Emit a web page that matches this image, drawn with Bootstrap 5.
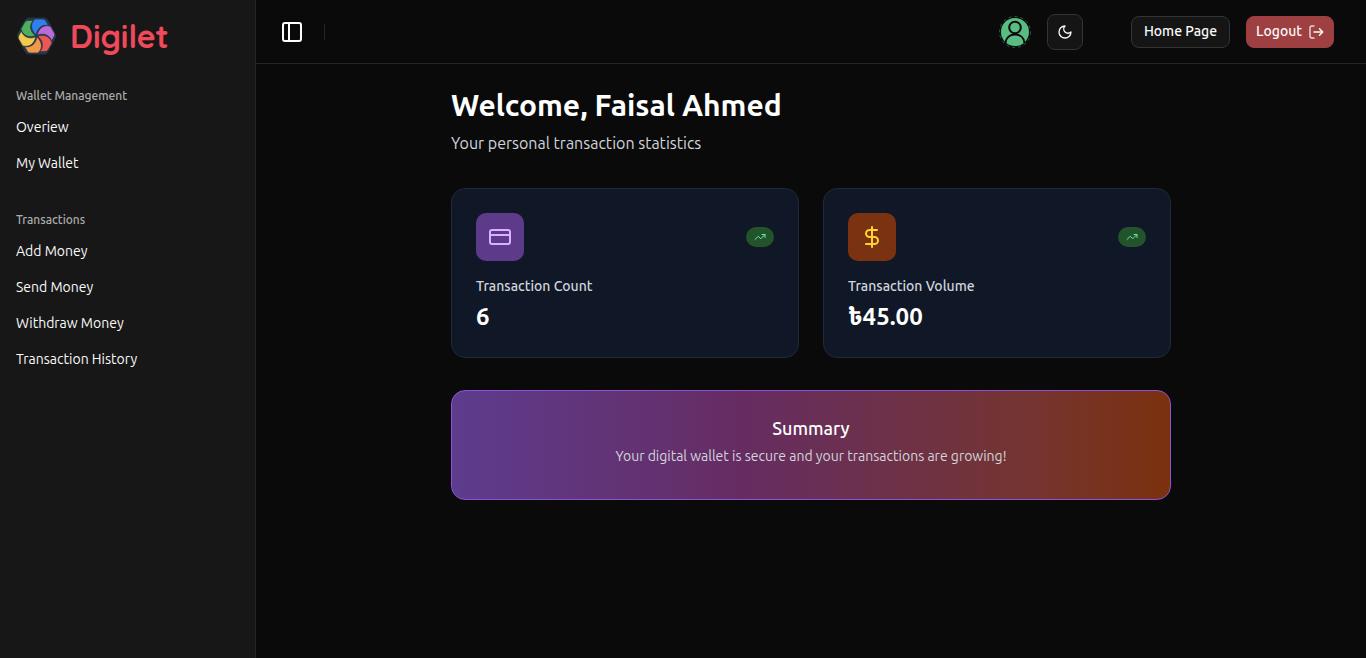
<!DOCTYPE html>
<html lang="en" data-bs-theme="dark">
<head>
<meta charset="utf-8">
<meta name="viewport" content="width=device-width, initial-scale=1">
<title>Digilet – Overview</title>
<link rel="stylesheet" href="https://cdn.jsdelivr.net/npm/bootstrap@5.3.0/dist/css/bootstrap.min.css">
<style>
  body { background: #0a0a0a; color: #fafafa; font-family: Ubuntu, "Noto Sans Bengali", "Noto Sans", sans-serif; font-size: 14px; line-height: 20px; }
  .side { width: 256px; flex: none; background: #171717; border-right: 1px solid #262626; }
  .brand { height: 72px; gap: 12px; color: #f04a5a; font: 700 32px/40px Quicksand, Lato, sans-serif; }
  .brand:hover { color: #f04a5a; }
  .side-label { font-size: 12px; line-height: 32px; font-weight: 500; color: #acacac; }
  .side .nav-link { padding: 5px 0 7px; margin-bottom: 4px; line-height: 20px; color: #fafafa; }
  .topbar { height: 64px; padding: 0 32px 0 24px; border-bottom: 1px solid #262626; }
  .rule { width: 1px; height: 16px; background: #262626; margin-left: 20px; }
  svg.ln { fill: none; stroke: currentColor; stroke-width: 2; stroke-linecap: round; stroke-linejoin: round; display: block; flex: none; }
  .top-btn { --bs-btn-font-size: 14px; --bs-btn-font-weight: 500; --bs-btn-line-height: 20px; --bs-btn-color: #fafafa; --bs-btn-border-radius: 8px; --bs-btn-bg: #151515; --bs-btn-border-color: #343434; --bs-btn-padding-y: 4px; --bs-btn-padding-x: 12px; --bs-btn-hover-color: #fff; --bs-btn-hover-bg: #262626; height: 32px; white-space: nowrap; }
  .square-btn { width: 36px; height: 36px; --bs-btn-padding-x: 0; }
  .logout-btn { --bs-btn-bg: #9e4042; --bs-btn-border-color: #9e4042; --bs-btn-hover-bg: #b04a4c; --bs-btn-padding-x: 9px; gap: 6px; }
  .home-btn { margin-left: 32px; }
  .content { max-width: 768px; padding: 23px 24px 24px; }
  h1 { font-size: 30px; line-height: 36px; font-weight: 700; color: #fff; }
  .sub { font-size: 16px; line-height: 24px; color: #d1d5dc; margin-bottom: 33px; }
  .stat { background: #101828; border: 1px solid #1e2939; border-radius: 14px; }
  .stat-head { margin-bottom: 15px; }
  .tile { width: 48px; height: 48px; border-radius: 10px; }
  .tile-count { background: #5d3a8a; color: #dab2ff; }
  .tile-volume { background: #7b3210; color: #ffd230; }
  .trend { width: 28px; height: 20px; background: #23532b; color: #6ee7a0; }
  .stat-name { font-weight: 500; color: #d1d5dc; margin-bottom: 5px; }
  .stat-value { font-size: 24px; line-height: 32px; font-weight: 700; color: #fff; }
  .summary { margin-top: 32px; padding: 23px 24px 33px; border: 1px solid #8b52d6; border-radius: 14px; background: linear-gradient(90deg, #5d3c8e, #662c62 40%, #6b3050 55%, #743431 80%, #7b310e); }
  .summary h2 { font-size: 18px; line-height: 28px; font-weight: 500; color: #fff; }
  .summary p { color: #d1d5dc; }
</style>
</head>
<body>
<div class="d-flex min-vh-100">
  <aside class="side px-3">
    <a href="#" class="brand d-flex align-items-center text-decoration-none">
      <svg width="42" height="40" viewBox="0 0 42 40" aria-hidden="true">
        <path d="M13 1.500h15q2.500 0 4 2.500l7.500 14q1 2 0 4l-7.500 14q-1.500 2.500-4 2.500H13q-2.500 0-4-2.500L1.500 22q-1-2 0-4L9 4q1.500-2.500 4-2.500Z" fill="#253746"/>
        <g transform="translate(20.500 20)" stroke="#253746" stroke-width=".7">
          <path d="M-.3-1C-4-4-8-11-1.500-17H6Q8-17 9-15.500L12-10.500C6-12 .5-8-.3-1Z" fill="#2f80ed"/>
          <path d="M-.3-1C-4-4-8-11-1.500-17H6Q8-17 9-15.500L12-10.500C6-12 .5-8-.3-1Z" fill="#bb6bd9" transform="rotate(60)"/>
          <path d="M-.3-1C-4-4-8-11-1.500-17H6Q8-17 9-15.500L12-10.500C6-12 .5-8-.3-1Z" fill="#eb5757" transform="rotate(120)"/>
          <path d="M-.3-1C-4-4-8-11-1.500-17H6Q8-17 9-15.500L12-10.500C6-12 .5-8-.3-1Z" fill="#f2994a" transform="rotate(180)"/>
          <path d="M-.3-1C-4-4-8-11-1.500-17H6Q8-17 9-15.500L12-10.500C6-12 .5-8-.3-1Z" fill="#f2c94c" transform="rotate(240)"/>
          <path d="M-.3-1C-4-4-8-11-1.500-17H6Q8-17 9-15.500L12-10.500C6-12 .5-8-.3-1Z" fill="#4fae5c" transform="rotate(300)"/>
        </g>
      </svg>
      <span>Digilet</span>
    </a>
    <nav class="nav flex-column flex-nowrap pt-2" aria-label="Main">
      <div class="side-label">Wallet Management</div>
      <a class="nav-link" href="#">Overiew</a>
      <a class="nav-link" href="#">My Wallet</a>
      <div class="side-label mt-3 pt-1">Transactions</div>
      <a class="nav-link" href="#">Add Money</a>
      <a class="nav-link" href="#">Send Money</a>
      <a class="nav-link" href="#">Withdraw Money</a>
      <a class="nav-link" href="#">Transaction History</a>
    </nav>
  </aside>
  <div class="flex-grow-1">
    <header class="topbar d-flex align-items-center justify-content-between">
      <div class="d-flex align-items-center">
        <button type="button" class="btn p-0 border-0 text-white" aria-label="Toggle sidebar">
          <svg class="ln" width="24" height="24" viewBox="0 0 24 24"><rect x="3" y="3" width="18" height="18" rx="2"/><path d="M9 3v18"/></svg>
        </button>
        <div class="rule"></div>
      </div>
      <div class="d-flex align-items-center gap-3">
        <button type="button" class="btn p-0 border-0 rounded-circle" aria-label="Account">
          <svg class="d-block" width="32" height="32" viewBox="0 0 32 32" fill="none">
            <circle cx="16" cy="16" r="15.500" stroke="#2a5c41" stroke-width="1" stroke-dasharray="3 3"/>
            <circle cx="16" cy="16" r="14" fill="#57bd80"/>
            <g stroke="#0a0a0a" stroke-width="2"><circle cx="16" cy="11.500" r="5.800"/><path d="M6.500 27c.5-5.500 4.500-8.500 9.500-8.500s9 3 9.500 8.500"/></g>
          </svg>
        </button>
        <button type="button" class="btn top-btn square-btn d-flex align-items-center justify-content-center" aria-label="Toggle theme">
          <svg class="ln" width="16" height="16" viewBox="0 0 24 24"><path d="M12 3a6 6 0 0 0 9 9 9 9 0 1 1-9-9Z"/></svg>
        </button>
        <a href="#" class="btn top-btn home-btn">Home Page</a>
        <button type="button" class="btn top-btn logout-btn d-flex align-items-center">
          <span class="align-self-start">Logout</span>
          <svg class="ln" width="16" height="16" viewBox="0 0 16 16"><g stroke-width="1.500"><path opacity=".8" d="M6 2H4a2 2 0 0 0-2 2v8a2 2 0 0 0 2 2h2"/><path d="M6 8h8.500M11.500 4.800 14.700 8l-3.200 3.200"/></g></svg>
        </button>
      </div>
    </header>
    <main class="content mx-auto">
      <h1 class="mb-2">Welcome, Faisal Ahmed</h1>
      <p class="sub">Your personal transaction statistics</p>
      <div class="row row-cols-1 row-cols-md-2 g-4">
        <div class="col">
          <section class="stat p-4">
            <div class="stat-head d-flex align-items-center justify-content-between">
              <div class="tile tile-count d-flex align-items-center justify-content-center">
                <svg class="ln" width="24" height="24" viewBox="0 0 24 24"><rect x="2" y="5" width="20" height="14" rx="2"/><path d="M2 10h20"/></svg>
              </div>
              <div class="trend rounded-pill d-flex align-items-center justify-content-center">
                <svg class="ln" width="12" height="12" viewBox="0 0 24 24"><path d="m22 7-8.500 8.500-5-5L2 17M16 7h6v6"/></svg>
              </div>
            </div>
            <div class="stat-name">Transaction Count</div>
            <div class="stat-value">6</div>
          </section>
        </div>
        <div class="col">
          <section class="stat p-4">
            <div class="stat-head d-flex align-items-center justify-content-between">
              <div class="tile tile-volume d-flex align-items-center justify-content-center">
                <svg class="ln" width="24" height="24" viewBox="0 0 24 24"><path d="M12 2v20M17 5H9.500a3.500 3.500 0 0 0 0 7h5a3.500 3.500 0 0 1 0 7H6"/></svg>
              </div>
              <div class="trend rounded-pill d-flex align-items-center justify-content-center">
                <svg class="ln" width="12" height="12" viewBox="0 0 24 24"><path d="m22 7-8.500 8.500-5-5L2 17M16 7h6v6"/></svg>
              </div>
            </div>
            <div class="stat-name">Transaction Volume</div>
            <div class="stat-value">৳45.00</div>
          </section>
        </div>
      </div>
      <section class="summary text-center">
        <h2 class="mb-1">Summary</h2>
        <p class="mb-0">Your digital wallet is secure and your transactions are growing!</p>
      </section>
    </main>
  </div>
</div>
<script src="https://cdn.jsdelivr.net/npm/bootstrap@5.3.0/dist/js/bootstrap.bundle.min.js"></script>
</body>
</html>
